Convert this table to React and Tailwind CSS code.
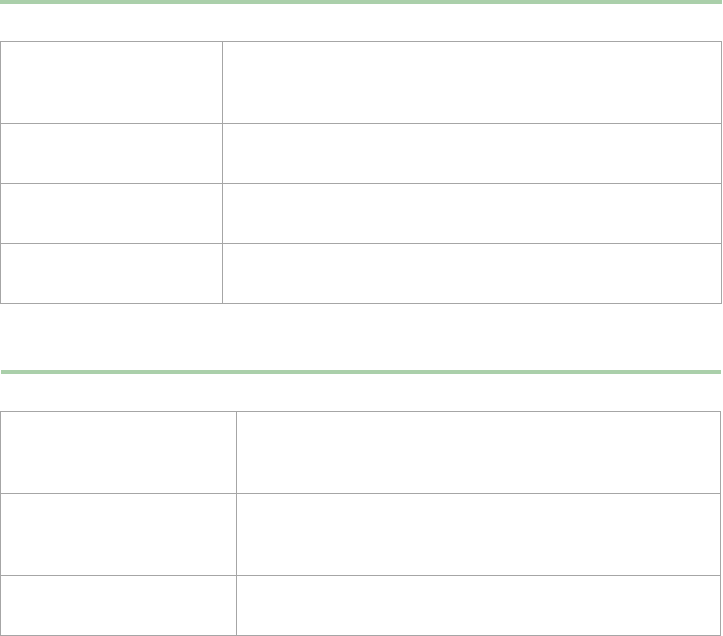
export default function App() {
  const cell = "border-[#a6a6a6]";
  return (
    <div className="w-[723px] h-[636px] bg-white overflow-hidden font-['Liberation_Sans',sans-serif]">
      <div className="h-[4px] w-[722px] bg-[#aacfaa]" />
      <div className="h-[37px]" />
      <div className="w-[722px] border border-[#a6a6a6]">
        <div className="grid grid-cols-[222px_1fr] h-[82px] border-b border-[#a6a6a6]">
          <div className={`border-r ${cell}`} />
          <div />
        </div>
        <div className="grid grid-cols-[222px_1fr] h-[60px] border-b border-[#a6a6a6]">
          <div className={`border-r ${cell}`} />
          <div />
        </div>
        <div className="grid grid-cols-[222px_1fr] h-[60px] border-b border-[#a6a6a6]">
          <div className={`border-r ${cell}`} />
          <div />
        </div>
        <div className="grid grid-cols-[222px_1fr] h-[59px]">
          <div className={`border-r ${cell}`} />
          <div />
        </div>
      </div>
      <div className="h-[66px]" />
      <div className="ml-[1px] h-[4px] w-[720px] bg-[#aacfaa]" />
      <div className="h-[37px]" />
      <div className="w-[721px] border border-[#a6a6a6]">
        <div className="grid grid-cols-[236px_1fr] h-[82px] border-b border-[#a6a6a6]">
          <div className={`border-r ${cell}`} />
          <div />
        </div>
        <div className="grid grid-cols-[236px_1fr] h-[82px] border-b border-[#a6a6a6]">
          <div className={`border-r ${cell}`} />
          <div />
        </div>
        <div className="grid grid-cols-[236px_1fr] h-[59px]">
          <div className={`border-r ${cell}`} />
          <div />
        </div>
      </div>
    </div>
  );
}
